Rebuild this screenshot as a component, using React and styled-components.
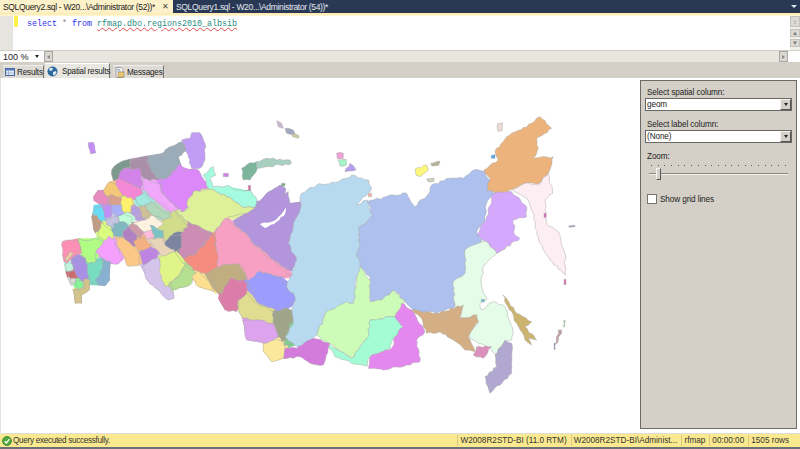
import React from 'react';
import styled, { createGlobalStyle } from 'styled-components';

const GlobalStyle = createGlobalStyle`
  html, body { margin: 0; padding: 0; background: #fff; overflow: hidden; }
  body { font-family: "Liberation Sans", Arial, sans-serif; }
`;

const Page = styled.div`
  width: 800px;
  height: 449px;
  display: flex;
  flex-direction: column;
  overflow: hidden;
`;

const TabBar = styled.div`
  height: 13px;
  flex: none;
  background: #293955;
  display: flex;
  align-items: stretch;
`;

const DocTab = styled.div`
  width: ${p => p.$width}px;
  padding-left: 3px;
  box-sizing: border-box;
  display: flex;
  align-items: center;
  justify-content: space-between;
  font-size: 8.5px;
  letter-spacing: -0.33px;
  white-space: nowrap;
  color: ${p => (p.$active ? '#222' : '#e4e8f0')};
  background: ${p => (p.$active ? '#fdf1c9' : 'transparent')};
`;

const CloseMark = styled.span`
  font-size: 8px;
  color: #444;
  margin-right: 4px;
`;

const TabMenu = styled.div`
  margin-left: auto;
  margin-right: 3px;
  align-self: center;
  width: 0;
  height: 0;
  border-left: 3px solid transparent;
  border-right: 3px solid transparent;
  border-top: 3px solid #dfe5ee;
`;

const AccentLine = styled.div`
  height: 3px;
  flex: none;
  background: linear-gradient(#ffe9a8, #fff6d8);
`;

const Editor = styled.div`
  height: 34px;
  flex: none;
  display: flex;
  background: #fff;
`;

const Gutter = styled.div`
  width: 13px;
  background: #e6e4df;
`;

const ChangeMark = styled.div`
  width: 4px;
  height: 11px;
  margin: 0 0 0 1px;
  background: #fff04d;
`;

const Code = styled.div`
  flex: 1;
  padding: 2px 0 0 9px;
  font-family: "Liberation Mono", monospace;
  font-size: 8.33px;
  line-height: 13px;
  white-space: pre;
`;

const Keyword = styled.span`
  color: #2a2cf0;
`;

const Star = styled.span`
  color: #888;
`;

const Squiggle = styled.span`
  color: #1f8a80;
  text-decoration: underline wavy #e2504f;
  text-decoration-thickness: 1px;
`;

const SideScroll = styled.div`
  width: 10px;
  display: flex;
  flex-direction: column;
  align-items: stretch;
  background: #f0eee8;
  gap: 2px;
`;

const ScrollBtn = styled.div`
  height: ${p => p.$h}px;
  background: #dcdad4;
  border: 1px solid #c4c2bc;
  box-sizing: border-box;
  display: flex;
  align-items: center;
  justify-content: center;
  font-size: 6px;
  line-height: 1;
  color: #777;
`;

const ZoomRow = styled.div`
  height: 12px;
  flex: none;
  display: flex;
  background: #e8e6df;
  border-top: 1px solid #cfcdc6;
  box-sizing: border-box;
`;

const ZoomBox = styled.div`
  width: 44px;
  background: #fff;
  font-size: 9px;
  padding-left: 3px;
  box-sizing: border-box;
  display: flex;
  align-items: center;
  justify-content: space-between;
  color: #222;
`;

const DownCaret = styled.span`
  width: 0;
  height: 0;
  margin-right: ${p => (p.$flush ? 0 : 5)}px;
  border-left: 2.5px solid transparent;
  border-right: 2.5px solid transparent;
  border-top: 3px solid #222;
`;

const HScrollBtn = styled.div`
  width: 9px;
  background: #d9d7d1;
  border: 1px solid #a9a7a2;
  box-sizing: border-box;
  display: flex;
  align-items: center;
  justify-content: center;
  margin-left: ${p => (p.$end ? 'auto' : '0')};
`;

const RowCorner = styled.div`
  width: 12px;
  background: #fff;
`;

const LeftCaret = styled.span`
  width: 0;
  height: 0;
  border-top: 2.5px solid transparent;
  border-bottom: 2.5px solid transparent;
  ${p => (p.$right ? 'border-left: 3px solid #888;' : 'border-right: 3px solid #888;')}
`;

const ResultTabs = styled.div`
  height: 16px;
  flex: none;
  background: #d4d0c8;
  display: flex;
  align-items: flex-end;
  padding-left: 3px;
  gap: 1px;
`;

const ResultTab = styled.div`
  height: ${p => (p.$active ? 15 : 13)}px;
  width: ${p => p.$width}px;
  margin-right: ${p => (p.$active ? 2 : 0)}px;
  box-sizing: border-box;
  display: flex;
  align-items: center;
  gap: ${p => (p.$active ? 4 : 2)}px;
  padding-left: 2px;
  font-size: 8.2px;
  letter-spacing: -0.22px;
  white-space: nowrap;
  color: #222;
  background: ${p => (p.$active ? '#e9e7e1' : '#dedbd4')};
  border-right: 1px solid #77756f;
  border-top: 1px solid ${p => (p.$active ? '#fff' : '#eee')};
  svg { flex: none; }
`;

const ResultArea = styled.div`
  flex: 1;
  min-height: 0;
  display: flex;
  background: #fff;
  padding: 2px 3px 4px 3px;
  border-left: 1px solid #e4e2dc;
  border-bottom: 1px solid #ddd;
`;

const MapCanvas = styled.svg`
  flex: none;
  display: block;
  width: 636px;
  height: 349px;
  filter: blur(0.35px);
`;

const Panel = styled.div`
  flex: 1;
  box-sizing: border-box;
  background: #d4d0c8;
  border: 1px solid #6d6b66;
  padding: 6px 4px 0 4px;
  display: flex;
  flex-direction: column;
  font-size: 8.2px;
  letter-spacing: -0.1px;
  color: #222;
`;

const PanelLabel = styled.div`
  height: 10px;
  line-height: 12px;
  margin-left: 2px;
`;

const SelectBox = styled.div`
  height: 13px;
  margin: 1px 0 8px;
  box-sizing: border-box;
  background: #fff;
  border: 1px solid #6a6864;
  display: flex;
  align-items: center;
  justify-content: space-between;
  padding-left: 1px;
`;

const SelectArrow = styled.div`
  width: 11px;
  height: 100%;
  box-sizing: border-box;
  background: #d4d0c8;
  border: 1px solid #f5f4f0;
  border-right-color: #555;
  border-bottom-color: #555;
  display: flex;
  align-items: center;
  justify-content: center;
`;

const ZoomTrack = styled.div`
  position: relative;
  height: 17px;
  margin: 0 3px 16px;
`;

const Ticks = styled.div`
  display: flex;
  justify-content: space-between;
  padding: 4px 3px 0 3px;
`;

const Tick = styled.i`
  width: 1px;
  height: 1px;
  background: #555;
`;

const TrackLine = styled.div`
  position: absolute;
  left: 1px;
  right: 1px;
  top: 12px;
  height: 1px;
  background: #8a8882;
  border-bottom: 1px solid #f2f1ed;
`;

const Thumb = styled.div`
  position: absolute;
  left: 8px;
  top: 7px;
  width: 5px;
  height: 12px;
  box-sizing: border-box;
  background: #d4d0c8;
  border: 1px solid #f7f6f3;
  border-right-color: #555;
  border-bottom-color: #555;
`;

const CheckRow = styled.div`
  display: flex;
  align-items: center;
  gap: 3px;
  margin-left: 2px;
`;

const CheckBox = styled.div`
  width: 10px;
  height: 10px;
  box-sizing: border-box;
  background: #fff;
  border: 1px solid #77756f;
`;

const StatusBar = styled.div`
  height: 15px;
  flex: none;
  box-sizing: border-box;
  display: flex;
  align-items: center;
  background: #fbe98f;
  border-bottom: 2px solid #6d7076;
  font-size: 8.2px;
  color: #333;
  padding: 0 7px 0 2px;
  white-space: nowrap;
`;

const StatusMessage = styled.div`
  display: flex;
  align-items: center;
  gap: 1px;
  margin-right: auto;
  letter-spacing: -0.32px;
`;

const StatusCell = styled.div`
  padding: 0 4px 0 2px;
  border-left: 1px solid #d5c985;
  line-height: 11px;
`;

const west = [
  ['#c48cf5', '115,98 130,97 138,128 122,132'],
  ['#c19cf4', '395,90 420,85 425,68 450,68 465,100 465,150 450,175 425,175 415,140 400,115'],
  ['#9cabb8', '290,145 335,135 345,120 385,100 395,95 408,120 385,140 395,170 370,180 345,212 320,205 305,185'],
  ['#7e9a8e', '185,180 205,160 240,147 243,172 215,180 210,210 190,212'],
  ['#a98fa8', '240,147 268,150 285,138 305,185 318,205 285,215 270,185 240,175'],
  ['#d283e8', '215,180 268,175 277,215 272,235 235,220 205,205'],
  ['#f487d6', '205,205 275,238 280,255 255,270 215,255 195,225'],
  ['#f5c878', '178,215 195,222 220,258 200,262 165,255 160,240'],
  ['#e88cc0', '145,240 165,255 175,262 172,290 130,262'],
  ['#d9a08c', '178,255 215,262 220,290 178,285'],
  ['#fdf06c', '215,258 245,262 252,285 245,308 222,308 212,285'],
  ['#f0a8fa', '278,205 330,222 335,250 385,295 365,310 345,290 305,265 280,240'],
  ['#dc88fa', '330,215 365,195 385,165 395,165 400,182 420,178 445,180 475,235 430,245 418,270 415,290 398,310 385,295 335,245'],
  ['#a4fbe0', '460,195 490,170 498,195 480,205 490,230 540,228 560,240 600,240 620,270 615,292 575,290 540,262 480,238 475,235'],
  ['#dff09a', '380,310 415,295 410,280 430,245 480,238 540,262 575,290 615,292 590,310 530,325 490,370 440,345 415,335'],
  ['#b295dc', '550,340 620,300 630,272 650,250 690,225 708,238 700,260 715,245 720,280 750,275 755,295 770,330 760,420 745,470 710,480 660,440 610,400 590,370'],
  ['#ffffff', '630,342 665,335 695,312 708,292 702,318 680,335 645,354'],
  ['#f8a0c4', '525,325 555,350 590,375 610,405 660,445 722,495 690,500 640,490 595,515 575,465 550,465 500,475 495,375'],
  ['#f48c80', '400,445 440,430 490,372 505,440 500,490 475,492 430,480'],
  ['#cc8cb4', '375,405 415,335 440,355 480,370 440,428 400,445'],
  ['#d2dd8c', '320,350 370,300 385,320 415,350 380,365 345,395 335,375'],
  ['#7c85a0', '345,395 360,378 390,373 395,410 375,425 345,410'],
  ['#fdf2e0', '250,338 285,330 305,315 340,340 325,352 320,370 275,365'],
  ['#b2d8bc', '280,290 310,278 340,305 365,320 345,328 300,310'],
  ['#d0c098', '265,290 285,285 300,312 280,325'],
  ['#b8a0e0', '245,285 265,305 278,328 255,322 243,305'],
  ['#a0e8e0', '255,262 285,248 305,275 280,288 262,280'],
  ['#c0fcd8', '205,318 225,310 248,325 245,345 225,350 208,335'],
  ['#68dcf4', '135,292 158,290 168,330 150,335 130,315'],
  ['#c090f8', '160,288 185,285 185,320 165,325'],
  ['#a8b0fa', '185,288 215,285 218,310 198,320'],
  ['#c09c84', '125,320 140,315 160,340 150,365 135,365'],
  ['#c4c4e4', '170,330 195,318 207,335 190,355 170,345'],
  ['#dcfc80', '155,335 190,370 190,385 165,392 142,380'],
  ['#80b8c0', '190,340 222,335 235,350 222,378 195,380'],
  ['#b080c0', '218,365 235,348 260,375 262,410 240,410 220,390'],
  ['#d09aa8', '235,345 260,345 282,370 270,385 262,375'],
  ['#7cc4c4', '300,345 340,362 340,382 310,385'],
  ['#fcbcdc', '280,370 305,360 315,380 295,390'],
  ['#f4b080', '250,395 280,383 305,405 290,425 265,420'],
  ['#e8d4b8', '295,388 340,385 345,405 375,420 340,445 325,425'],
  ['#be84e4', '265,425 295,415 325,430 320,445 280,465'],
  ['#fcc888', '195,385 222,385 250,410 265,425 270,465 232,468 225,445 210,420'],
  ['#f4a0fc', '135,425 175,378 195,395 215,440 205,462 170,455'],
  ['#b0fc84', '85,385 105,392 135,385 160,395 140,420 135,462 115,460 95,430'],
  ['#fc90b4', '37,395 55,390 85,395 92,420 70,440 50,460 40,445'],
  ['#e8d0a0', '45,445 60,425 70,430 50,455'],
  ['#c0f4dc', '45,462 65,460 70,480 50,485'],
  ['#a890e4', '72,440 100,445 115,470 115,505 95,515 70,490'],
  ['#cc6c70', '55,487 75,483 85,505 60,505'],
  ['#d8dcd8', '58,508 75,505 78,520 62,520'],
  ['#88f498', '75,515 95,512 105,530 85,540'],
  ['#d4c48c', '100,508 120,510 118,540 95,555 95,580 75,580 70,545 105,535'],
  ['#78dcc0', '115,462 160,448 165,490 145,520 125,520 112,490'],
  ['#88b0d0', '160,452 182,455 178,480 180,510 165,528 135,510 150,495'],
  ['#d4c4ec', '275,470 325,440 335,480 345,520 365,540 372,565 355,570 330,545 295,515'],
  ['#e0f488', '328,445 370,425 408,465 385,500 345,530 330,490'],
  ['#b4e090', '360,525 385,500 405,465 438,490 420,525 370,540'],
  ['#fce090', '425,500 445,483 478,515 492,545 445,530'],
  ['#c0ae80', '472,490 510,470 555,460 590,510 540,510 515,552 495,530'],
  ['#dc7ca8', '510,575 515,555 540,505 590,518 590,550 565,570 560,605 525,600'],
  ['#9c9cfc', '590,515 630,483 695,510 720,530 738,570 690,605 620,575'],
  ['#e0dc90', '565,600 565,575 590,550 620,580 670,605 670,645 625,630 580,625'],
  ['#dca4ec', '578,630 625,630 680,645 685,680 660,700 590,690'],
  ['#a0a488', '672,610 700,600 730,610 725,640 710,690 695,695 675,650'],
  ['#80cc90', '720,640 745,650 748,690 730,700 690,715 708,690'],
  ['#fce89c', '640,700 690,690 705,710 710,745 665,755 640,725'],
  ['#7cb49c', '575,175 600,158 620,155 622,175 600,210 580,210'],
  ['#a8d0c0', '620,155 650,145 720,150 725,160 650,170 622,175'],
  ['#d080e8', '520,190 535,190 535,200 520,200'],
  ['#d070a0', '595,226 602,226 602,242 595,242'],
  ['#60b060', '695,220 705,220 705,227 695,227'],
  ['#c8b8d0', '680,32 695,40 700,55 685,50'],
  ['#a0a8c0', '705,55 730,60 735,72 710,70'],
  ['#d0c8a0', '725,72 748,78 745,85 728,80'],
];

const east = [
  ['#b8daf0', '65,250 110,225 175,215 200,205 215,195 265,210 275,235 230,285 262,270 278,315 235,355 240,400 230,430 245,475 225,520 230,575 210,580 140,605 110,675 75,715 50,710 15,680 40,640 35,600 45,560 20,530 50,450 25,400 45,330 60,300 60,260'],
  ['#adc0ee', '262,275 340,255 380,250 405,290 450,245 455,225 510,205 550,205 580,180 615,185 635,225 640,250 620,280 615,330 590,365 605,395 555,420 555,490 520,515 525,590 470,610 400,600 375,575 345,540 320,570 272,575 270,500 245,475 230,430 240,400 235,355 278,315'],
  ['#ecb47c', '612,180 655,150 645,125 680,80 755,40 780,20 815,55 770,85 775,115 760,145 820,140 805,190 775,222 735,220 695,238 660,255 620,240 630,205'],
  ['#fdeef4', '695,238 735,220 775,225 805,190 818,250 795,270 800,340 835,365 855,430 857,495 810,450 780,400 755,300 740,265'],
  ['#d4a8fc', '640,250 695,245 740,290 740,320 700,330 705,375 720,385 650,430 620,395 590,375 620,320'],
  ['#e4fce8', '600,398 620,395 650,430 610,470 605,530 620,570 600,580 605,600 640,575 675,590 700,670 695,690 670,700 650,740 630,715 595,700 565,675 595,635 590,615 555,635 525,590 520,515 555,490 555,420'],
  ['#d4ae84', '395,600 470,610 550,585 540,625 590,615 595,635 565,680 585,725 555,720 520,690 480,665 440,670 420,620'],
  ['#dc90bc', '590,710 635,710 610,745 580,735'],
  ['#b0a8d0', '675,690 695,700 695,790 630,850 615,800 650,770 645,735 670,700'],
  ['#ccb470', '668,555 710,610 755,635 735,650 770,690 745,685 755,705 735,690 710,640'],
  ['#ccfcb8', '240,470 270,510 270,575 305,570 340,540 375,575 345,620 270,630 265,680 215,745 145,700 110,675 140,605 200,575 220,580 230,520'],
  ['#a4fcd4', '270,630 345,620 370,650 340,685 330,715 265,745 262,768 215,760 165,740 145,705 215,745 265,680'],
  ['#e488f0', '365,580 395,600 435,665 410,690 420,755 380,765 310,780 265,775 270,740 335,715 345,680 370,650 345,620'],
  ['#d47cdc', '15,715 50,715 100,685 150,700 130,765 90,760 60,740 10,745'],
  ['#fcf87c', '405,178 440,165 445,180 420,200 408,195'],
  ['#b4b494', '452,160 480,154 476,166 456,168'],
  ['#d0d0b8', '440,207 462,204 462,214 445,216'],
  ['#f4a0d8', '170,130 190,130 190,145 172,146'],
  ['#a4f4c8', '175,150 198,148 200,165 180,168'],
  ['#b89cf0', '210,160 228,180 195,185'],
  ['#eadbd4', '652,42 668,38 666,62 654,64'],
  ['#50a8e8', '634,136 645,134 645,145 634,145'],
  ['#f4b0a0', '265,250 275,250 275,260 265,260'],
  ['#60c0d8', '604,568 613,568 613,576 604,576'],
  ['#e060c0', '792,310 798,310 798,322 792,322'],
  ['#e070b0', '852,508 858,508 858,524 852,524'],
  ['#80c080', '851,632 856,632 854,650 850,650'],
  ['#c0a0a0', '835,660 845,660 832,700 828,700'],
  ['#9080c0', '822,700 828,700 826,718 822,718'],
  ['#a0a0c0', '866,348 885,346 885,350 868,352'],
];

// mainland outline, the fill pass below is clipped to it so neighbours close their gaps
const westMainland =
  '37,395 85,385 135,385 142,380 130,360 125,320 130,295 130,262 145,240 160,240 178,215 190,212 185,180 205,160 240,147 285,138 335,130 390,95 408,120 385,140 395,170 420,178 445,180 475,235 490,232 540,230 600,242 620,272 630,272 650,250 690,225 720,280 750,275 800,250 800,750 710,745 665,755 640,725 640,700 590,690 578,630 565,600 525,600 510,575 492,545 445,530 425,505 420,525 370,540 372,565 355,570 330,545 295,515 270,465 232,468 225,445 205,462 182,460 178,510 165,528 120,525 118,540 95,555 95,580 75,580 70,545 58,520 45,485 40,445';

const noise = (x, y, i) => {
  const v = Math.sin(x * 12.9898 + y * 78.233 + i * 37.719) * 43758.5453;
  return (v - Math.floor(v)) * 2 - 1;
};

// breaks long edges into a jagged line, the same for both regions sharing an edge
const roughen = points => {
  const pts = points.split(' ').map(s => s.split(',').map(Number));
  const out = [];
  pts.forEach((a, idx) => {
    const b = pts[(idx + 1) % pts.length];
    out.push(a.join(','));
    const flip = a[0] > b[0] || (a[0] === b[0] && a[1] > b[1]);
    const [p, q] = flip ? [b, a] : [a, b];
    const dx = q[0] - p[0];
    const dy = q[1] - p[1];
    const len = Math.hypot(dx, dy);
    const n = Math.floor(len / 9);
    const mids = [];
    for (let i = 1; i < n; i++) {
      const off = noise(p[0] + q[0], p[1] + q[1], i) * 3.2;
      const x = p[0] + (dx * i) / n - (dy / len) * off;
      const y = p[1] + (dy * i) / n + (dx / len) * off;
      mids.push(`${x.toFixed(1)},${y.toFixed(1)}`);
    }
    out.push(...(flip ? mids.reverse() : mids));
  });
  return out.join(' ');
};

const Region = ({ fill, points }) => (
  <polygon
    points={roughen(points)}
    fill={fill}
    stroke={fill === '#ffffff' ? 'none' : '#a9a9a9'}
    strokeWidth="1.5"
    strokeLinejoin="round"
  />
);

const ResultsIcon = () => (
  <svg width="10" height="10" viewBox="0 0 10 10">
    <rect x="0.5" y="1.5" width="9" height="7" fill="#dfe8f6" stroke="#46639c" />
    <rect x="0.5" y="1.5" width="9" height="2" fill="#5878b8" />
    <path d="M3.5 4v4M1 6h8" stroke="#8aa0c8" strokeWidth="0.6" />
  </svg>
);

const GlobeIcon = () => (
  <svg width="11" height="11" viewBox="0 0 11 11">
    <circle cx="5.5" cy="5.5" r="5" fill="#2f6a9c" />
    <path d="M2 3l2-1.5 2 1-1 2-2 .5zM6 6l3-1 .5 2-2 2.5-1.5-1z" fill="#dbe8f2" />
  </svg>
);

const MessagesIcon = () => (
  <svg width="10" height="11" viewBox="0 0 10 11">
    <path d="M1 .5h5l2 2v8H1z" fill="#fbfbf6" stroke="#8c8c92" strokeWidth="0.8" />
    <rect x="3" y="5" width="6" height="5" fill="#e8c878" stroke="#93825a" strokeWidth="0.6" />
    <path d="M2 2.5h3M2 4h4" stroke="#6f8fc0" strokeWidth="0.7" />
  </svg>
);

const OkIcon = () => (
  <svg width="10" height="10" viewBox="0 0 10 10">
    <circle cx="5" cy="5" r="4.5" fill="#4fa83d" stroke="#2f7427" strokeWidth="0.7" />
    <path d="M2.6 5.2l1.8 1.8 3-3.8" fill="none" stroke="#fff" strokeWidth="1.3" />
  </svg>
);

const tickList = Array.from({ length: 21 });

export default function App() {
  return (
    <Page>
      <GlobalStyle />
      <TabBar>
        <DocTab $active $width={173}>
          SQLQuery2.sql - W20...\Administrator (52))*
          <CloseMark>✕</CloseMark>
        </DocTab>
        <DocTab $width={220}>SQLQuery1.sql - W20...\Administrator (54))*</DocTab>
        <TabMenu />
      </TabBar>
      <AccentLine />
      <Editor>
        <Gutter />
        <ChangeMark />
        <Code>
          <Keyword>select</Keyword> <Star>*</Star> <Keyword>from</Keyword>{' '}
          <Squiggle>rfmap.dbo.regions2010_albsib</Squiggle>
        </Code>
        <SideScroll>
          <ScrollBtn $h={11}>↕</ScrollBtn>
          <ScrollBtn $h={8}>▲</ScrollBtn>
          <ScrollBtn $h={8}>▼</ScrollBtn>
        </SideScroll>
      </Editor>
      <ZoomRow>
        <ZoomBox>
          100 %
          <DownCaret />
        </ZoomBox>
        <HScrollBtn>
          <LeftCaret />
        </HScrollBtn>
        <HScrollBtn $end>
          <LeftCaret $right />
        </HScrollBtn>
        <RowCorner />
      </ZoomRow>
      <ResultTabs>
        <ResultTab $width={41}>
          <ResultsIcon />
          Results
        </ResultTab>
        <ResultTab $active $width={65}>
          <GlobeIcon />
          Spatial results
        </ResultTab>
        <ResultTab $width={51}>
          <MessagesIcon />
          Messages
        </ResultTab>
      </ResultTabs>
      <ResultArea>
        <MapCanvas viewBox="4 80 636 349">
          <defs>
            <clipPath id="west-mainland">
              <polygon points={westMainland} />
            </clipPath>
          </defs>
          <g transform="translate(50 110) scale(0.3333)">
            <g clipPath="url(#west-mainland)">
              {west
                .filter(([fill]) => fill !== '#ffffff')
                .map(([fill, points]) => (
                  <polygon
                    key={points}
                    points={points}
                    fill={fill}
                    stroke={fill}
                    strokeWidth="16"
                    strokeLinejoin="round"
                  />
                ))}
            </g>
            {west.map(([fill, points]) => (
              <Region key={points} fill={fill} points={points} />
            ))}
          </g>
          <g transform="translate(280 110) scale(0.3333)">
            {east.map(([fill, points]) => (
              <Region key={points} fill={fill} points={points} />
            ))}
          </g>
        </MapCanvas>
        <Panel>
          <PanelLabel>Select spatial column:</PanelLabel>
          <SelectBox>
            geom
            <SelectArrow>
              <DownCaret $flush />
            </SelectArrow>
          </SelectBox>
          <PanelLabel>Select label column:</PanelLabel>
          <SelectBox>
            (None)
            <SelectArrow>
              <DownCaret $flush />
            </SelectArrow>
          </SelectBox>
          <PanelLabel>Zoom:</PanelLabel>
          <ZoomTrack>
            <Ticks>
              {tickList.map((_, i) => (
                <Tick key={i} />
              ))}
            </Ticks>
            <TrackLine />
            <Thumb />
          </ZoomTrack>
          <CheckRow>
            <CheckBox />
            Show grid lines
          </CheckRow>
        </Panel>
      </ResultArea>
      <StatusBar>
        <StatusMessage>
          <OkIcon />
          Query executed successfully.
        </StatusMessage>
        <StatusCell>W2008R2STD-BI (11.0 RTM)</StatusCell>
        <StatusCell>W2008R2STD-BI\Administ...</StatusCell>
        <StatusCell>rfmap</StatusCell>
        <StatusCell>00:00:00</StatusCell>
        <StatusCell>1505 rows</StatusCell>
      </StatusBar>
    </Page>
  );
}
